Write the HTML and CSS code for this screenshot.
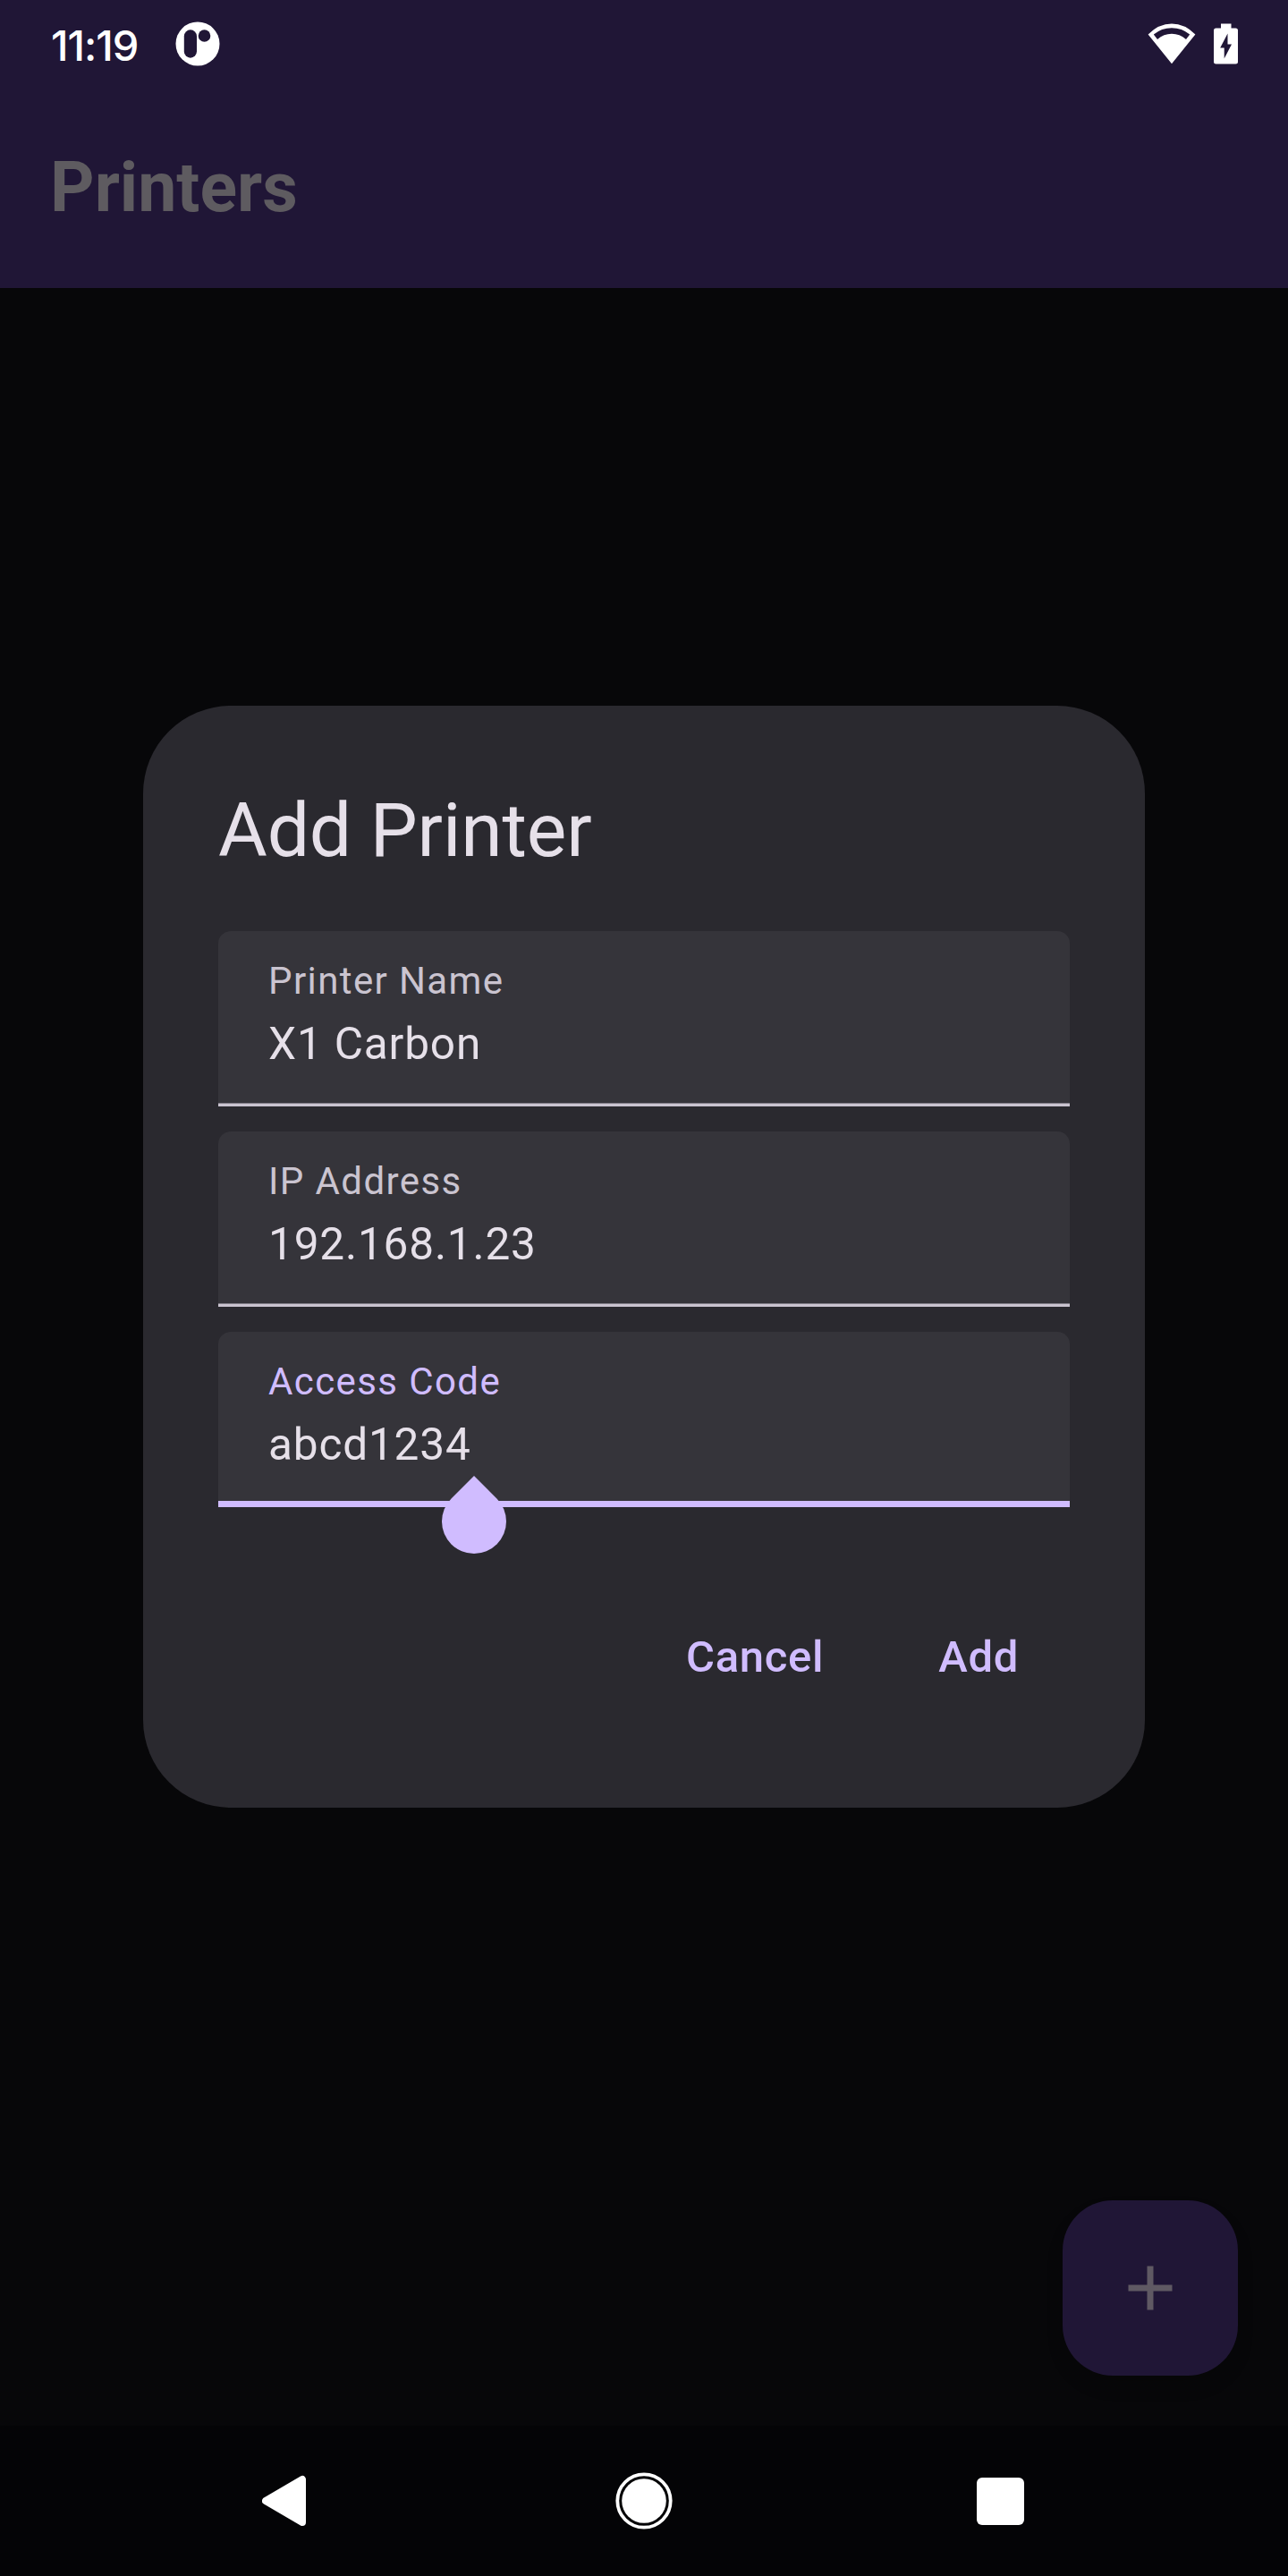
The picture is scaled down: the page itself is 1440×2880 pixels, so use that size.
FILE: index.html
```html
<!DOCTYPE html>
<html lang="en">
<head>
<meta charset="utf-8">
<title>Printers</title>
<link rel="stylesheet" href="styles.css">
</head>
<body>
<div class="screen">
  <header class="status-bar">
    <span class="clock">11:19</span>
    <svg class="app-icon" width="50" height="50" viewBox="0 0 50 50"><circle cx="25" cy="25" r="24.500" fill="#fff"/><rect x="9.800" y="9.300" width="14.200" height="31.400" rx="7.100" fill="#201636"/><circle cx="32.500" cy="16" r="6.800" fill="#201636"/></svg>
    <span class="spacer"></span>
    <svg class="wifi" width="54" height="46" viewBox="0 0 54 46"><path fill="#fff" fill-rule="evenodd" d="M27 45.300L.6 12.500Q12.500 .5 27 .5T53.400 12.500ZM6.800 12.600L11 18Q18 11.800 27 11.800T43 18L47.200 12.600Q38.500 5.200 27 5.200T6.800 12.600Z"/></svg>
    <svg class="battery" width="27" height="46" viewBox="0 0 27 46"><path fill="#fff" fill-rule="evenodd" d="M8 .5H19.500V5.500H24.500Q27 5.500 27 8V43Q27 45.500 24.500 45.500H2.500Q0 45.500 0 43V8Q0 5.500 2.500 5.500H8ZM15.500 11.500L7.200 27.500H11.700V39.500L20 23.500H15.500Z"/></svg>
  </header>
  <div class="app-bar"><h1 class="app-title">Printers</h1></div>
  <main class="content">
    <button class="fab" aria-label="Add printer"><svg width="84" height="84" viewBox="0 0 24 24"><path fill="#5f5963" d="M19 13h-6v6h-2v-6H5v-2h6V5h2v6h6z"/></svg></button>
  </main>
  <nav class="nav-bar">
    <svg class="nav-back" width="50" height="58" viewBox="0 0 50 58"><path d="M4 29L45 5V53Z" fill="#fff" stroke="#fff" stroke-width="8" stroke-linejoin="round"/></svg>
    <svg class="nav-home" width="64" height="64" viewBox="0 0 64 64"><circle cx="32" cy="32" r="29.700" fill="none" stroke="#fff" stroke-width="3.800"/><circle cx="32" cy="32" r="24.800" fill="#fff"/></svg>
    <span class="nav-recent"></span>
  </nav>
  <div class="scrim">
    <section class="dialog" role="dialog">
      <h2 class="dialog-title">Add Printer</h2>
      <div class="fields">
        <div class="field"><span class="label">Printer Name</span><span class="value">X1 Carbon</span></div>
        <div class="field"><span class="label">IP Address</span><span class="value">192.168.1.23</span></div>
        <div class="field focused"><span class="label">Access Code</span><span class="value">abcd1234</span><span class="cursor-handle"></span></div>
      </div>
      <div class="actions"><button class="action">Cancel</button><button class="action">Add</button></div>
    </section>
  </div>
</div>
</body>
</html>
```
FILE: styles.css
```css
* { box-sizing: border-box; }
body { margin: 0; background: #070709; font-family: Roboto, sans-serif; }
button { border: 0; padding: 0; background: none; font: inherit; }
svg { display: block; flex: none; }

.screen {
  position: relative;
  display: flex;
  flex-direction: column;
  width: 1440px;
  height: 2880px;
  overflow: hidden;
  background: #070709;
}

.status-bar {
  display: flex;
  align-items: center;
  height: 98px;
  padding: 0 56px;
  background: #201636;
}
.clock {
  width: 139.5px;
  padding: 3px 0 0 1px;
  color: #fff;
  font: 500 47px/58px Inter, sans-serif;
  letter-spacing: -1px;
}
.spacer { flex: 1; }
.wifi { margin-right: 20px; }

.app-bar {
  display: flex;
  align-items: center;
  height: 224px;
  padding: 0 56px;
  background: #201636;
}
.app-title {
  margin: 0;
  color: #5e5b60;
  font-size: 77px;
  font-weight: 700;
  line-height: 98px;
}

.content {
  display: flex;
  flex: 1;
  align-items: flex-end;
  justify-content: flex-end;
  padding: 56px;
}
.fab {
  display: flex;
  align-items: center;
  justify-content: center;
  width: 196px;
  height: 196px;
  border-radius: 56px;
  background: #201636;
  box-shadow: 0 12px 18px rgba(0, 0, 0, .15);
}

.nav-bar {
  display: flex;
  align-items: center;
  height: 168px;
  padding: 0 295.5px 0 293px;
  justify-content: space-between;
  background: #040406;
}
.nav-home { margin-left: 5.5px; }
.nav-recent { width: 53px; height: 53px; border-radius: 6px; background: #fff; }

.scrim {
  position: absolute;
  inset: 98px 0 168px;
  display: flex;
  align-items: center;
  justify-content: center;
}
.dialog {
  width: 1120px;
  height: 1232px;
  padding: 84px;
  border-radius: 98px;
  background: #2a292f;
}
.dialog-title {
  margin: 0 0 56px;
  color: #e6e0e9;
  font-size: 84px;
  font-weight: 400;
  line-height: 112px;
  letter-spacing: -.15px;
}
.fields { display: flex; flex-direction: column; gap: 28px; }
.field {
  position: relative;
  display: flex;
  flex-direction: column;
  height: 196px;
  padding: 28px 56px 0;
  border-radius: 14px 14px 0 0;
  background: linear-gradient(#cac4d0, #cac4d0) bottom / 100% 3px no-repeat, linear-gradient(#827e88, #827e88) 0 192px / 100% 1px no-repeat, #35343a;
}
.focused { background: linear-gradient(#d0bcff, #d0bcff) bottom / 100% 7px no-repeat, #35343a; }
.label { color: #cac4d0; font-size: 42px; line-height: 56px; letter-spacing: 1.4px; }
.focused .label { color: #d0bcff; }
.value { margin-top: 7px; color: #e6e0e9; font-size: 49.5px; line-height: 70px; letter-spacing: .85px; }
.cursor-handle {
  position: absolute;
  left: 250px;
  top: 176px;
  width: 72px;
  height: 72px;
  border-radius: 0 50% 50% 50%;
  background: #d0bcff;
  transform: rotate(45deg);
}
.actions {
  display: flex;
  justify-content: flex-end;
  gap: 16px;
  margin-top: 98px;
  padding-right: 1px;
}
.action {
  height: 140px;
  padding: 0 56px;
  color: #d0bcff;
  font-size: 49px;
  font-weight: 500;
  line-height: 70px;
  letter-spacing: .7px;
}
```
